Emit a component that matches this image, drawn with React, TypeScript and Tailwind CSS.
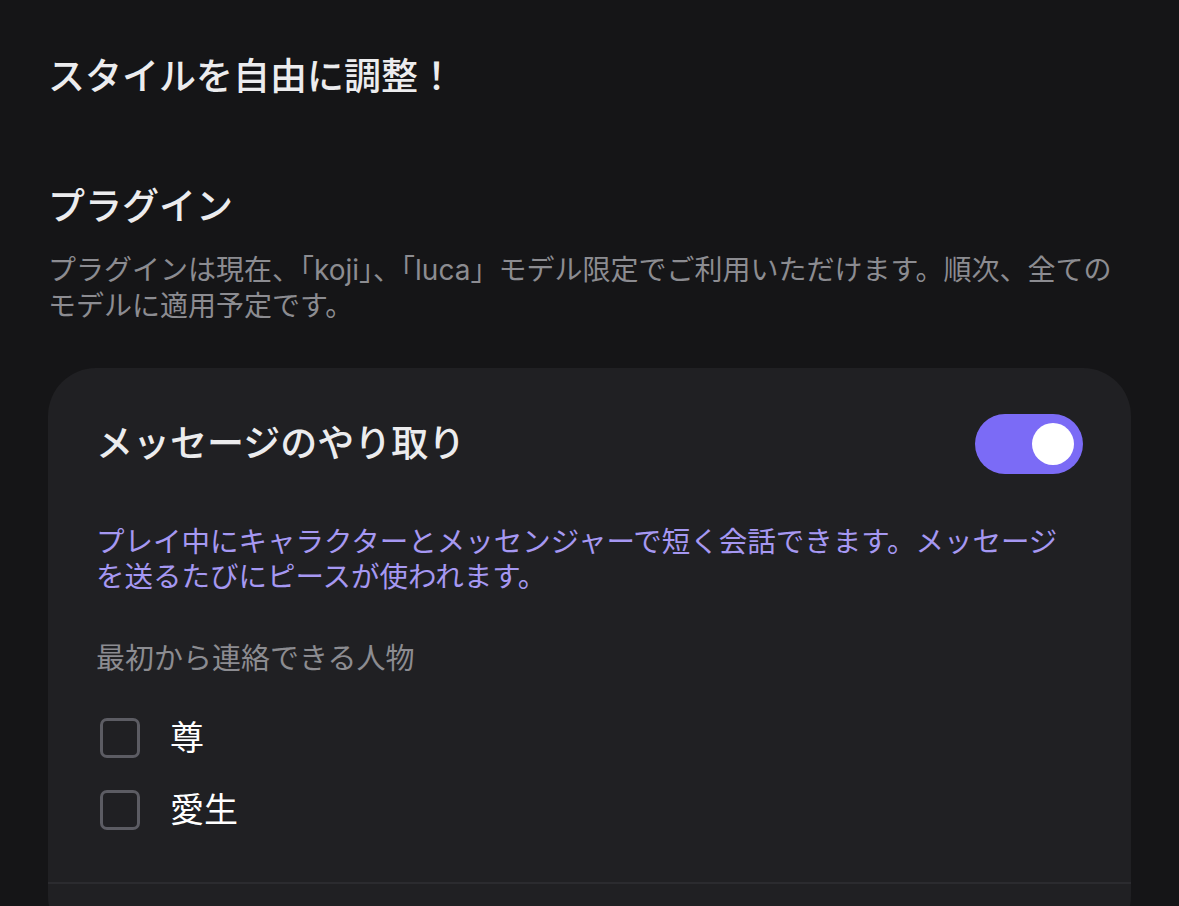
import { useState } from "react";

const font = "font-['Inter','Noto_Sans_CJK_JP',sans-serif]";

interface Person {
  id: string;
  name: string;
}

const people: Person[] = [
  { id: "takeru", name: "尊" },
  { id: "aoi", name: "愛生" },
];

function Toggle({ on, onChange }: { on: boolean; onChange: (v: boolean) => void }) {
  return (
    <button
      onClick={() => onChange(!on)}
      className={`flex h-[60px] w-[108px] shrink-0 items-center rounded-full px-[9px] transition-colors ${
        on ? "justify-end bg-[#7b6bf6]" : "justify-start bg-[#3a3a40]"
      }`}
    >
      <span className="h-[42px] w-[42px] rounded-full bg-white" />
    </button>
  );
}

export default function App() {
  const [enabled, setEnabled] = useState(true);
  const [checked, setChecked] = useState<Record<string, boolean>>({});

  return (
    <div className={`min-h-[906px] bg-[#151517] px-[48px] pt-[55px] ${font}`}>
      <h1 className="text-[37px] leading-[44px] font-medium text-[#ececee]">
        スタイルを自由に調整！
      </h1>

      <h2 className="mt-[86px] text-[37px] leading-[44px] font-medium text-[#ececee]">
        プラグイン
      </h2>
      <p className="mt-[23px] text-[28px] leading-[36px] text-[#8c8c91]">
        プラグインは現在、「koji」、「luca」モデル限定でご利用いただけます。順次、全てのモデルに適用予定です。
      </p>

      {/* ── Card: messaging plugin ── */}
      <section className="mt-[44px] overflow-hidden rounded-[48px] bg-[#202023]">
        <div className="px-[48px] pt-[46px] pb-[52px]">
          <div className="flex items-center justify-between">
            <h3 className="text-[37px] leading-[44px] font-medium text-[#ececee]">
              メッセージのやり取り
            </h3>
            <Toggle on={enabled} onChange={setEnabled} />
          </div>

          <p className="mt-[50px] max-w-[985px] text-[28.5px] leading-[35px] text-[#a698f2]">
            プレイ中にキャラクターとメッセンジャーで短く会話できます。メッセージを送るたびにピースが使われます。
          </p>

          <p className="mt-[47px] text-[29px] leading-[35px] text-[#8c8c91]">
            最初から連絡できる人物
          </p>

          <div className="mt-[42px] flex flex-col gap-[32px] pl-[4px]">
            {people.map((p) => (
              <label key={p.id} className="flex h-[40px] cursor-pointer items-center gap-[30px]">
                <input
                  type="checkbox"
                  className="peer sr-only"
                  checked={!!checked[p.id]}
                  onChange={(e) => setChecked({ ...checked, [p.id]: e.target.checked })}
                />
                <span className="h-[40px] w-[40px] rounded-[7px] border-[3px] border-[#5c5c63] peer-checked:border-[#7b6bf6] peer-checked:bg-[#7b6bf6]" />
                <span className="text-[34px] leading-[40px] text-white">{p.name}</span>
              </label>
            ))}
          </div>
        </div>
        <div className="h-[2px] bg-[#2b2b2f]" />
        <div className="h-[60px]" />
      </section>
    </div>
  );
}
